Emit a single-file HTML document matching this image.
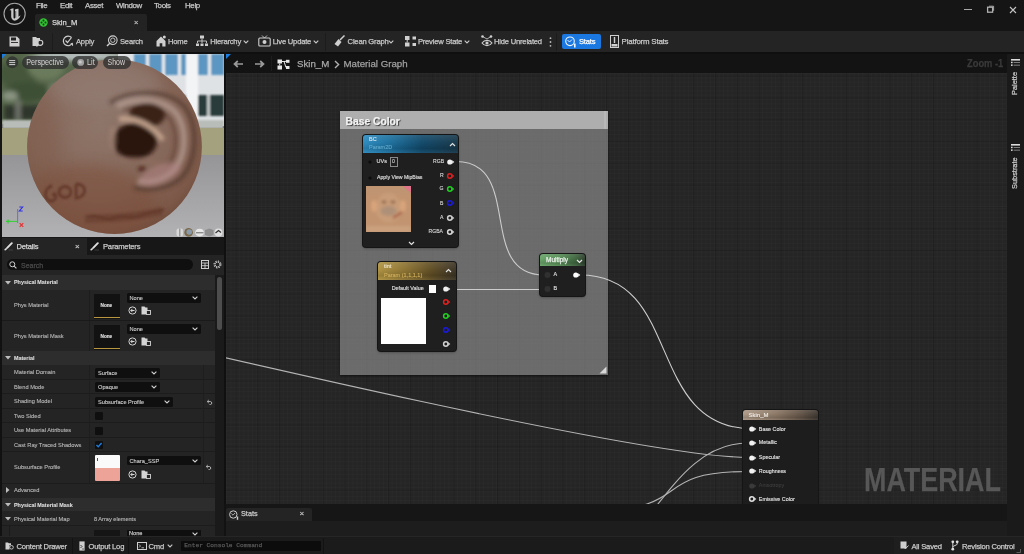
<!DOCTYPE html>
<html><head><meta charset="utf-8">
<style>
*{margin:0;padding:0;box-sizing:border-box}
html,body{width:1024px;height:554px;overflow:hidden;background:#151515;font-family:"Liberation Sans",sans-serif;color:#c8c8c8}
.a{position:absolute}
.t{position:absolute;white-space:nowrap;line-height:1;-webkit-text-stroke:0.25px currentColor}
</style></head><body><div style="position:absolute;left:0;top:0;width:1024px;height:554px;will-change:transform">

<!-- ===== TITLE BAR ===== -->
<div class="a" style="left:0;top:0;width:1024px;height:31px;background:#151515"></div>
<!-- UE logo -->
<svg class="a" style="left:3px;top:2px" width="24" height="24" viewBox="0 0 24 24">
<circle cx="11.6" cy="11.8" r="10.6" fill="none" stroke="#a8a8a8" stroke-width="1.1"/>
<path d="M6.5 8.2 C7.5 7 9 6.3 10.5 6.2 L10.5 15.5 C10.5 16.5 11.3 16.8 12 16.3 L12 7.5 C13 7 14.5 6.6 15.5 6.8 L15.5 14.8 C16.3 14.4 17 13.8 17.6 13.2 C16.8 15.8 14.6 18.2 11.8 18.8 C9.6 18.2 8.2 16.6 8.2 14.8 L8.2 8.3 C7.6 8.2 7 8.1 6.5 8.2Z" fill="#c8c8c8"/>
<path d="M12.7 9 L12.7 15.8" stroke="#151515" stroke-width="0.6"/>
</svg>
<!-- menu -->
<div class="t" style="left:36px;top:2.3px;font-size:7.9px;letter-spacing:-0.35px;color:#c8c8c8">File</div>
<div class="t" style="left:60px;top:2.3px;font-size:7.9px;letter-spacing:-0.35px;color:#c8c8c8">Edit</div>
<div class="t" style="left:85px;top:2.3px;font-size:7.9px;letter-spacing:-0.35px;color:#c8c8c8">Asset</div>
<div class="t" style="left:116px;top:2.3px;font-size:7.9px;letter-spacing:-0.35px;color:#c8c8c8">Window</div>
<div class="t" style="left:154px;top:2.3px;font-size:7.9px;letter-spacing:-0.35px;color:#c8c8c8">Tools</div>
<div class="t" style="left:185px;top:2.3px;font-size:7.9px;letter-spacing:-0.35px;color:#c8c8c8">Help</div>
<!-- tab -->
<div class="a" style="left:35px;top:14px;width:112px;height:17px;background:#232323;border-radius:2px 2px 0 0"></div>
<svg class="a" style="left:38.5px;top:17.5px" width="9" height="9" viewBox="0 0 9 9"><circle cx="4.5" cy="4.5" r="4.2" fill="#36c236"/><circle cx="4.5" cy="2.5" r="1" fill="#124012"/><circle cx="2.5" cy="4.5" r="1" fill="#124012"/><circle cx="6.5" cy="4.5" r="1" fill="#124012"/><circle cx="4.5" cy="6.5" r="1" fill="#124012"/></svg>
<div class="t" style="left:52px;top:18.8px;font-size:7.6px;color:#d8d8d8">Skin_M</div>
<div class="t" style="left:134px;top:18.5px;font-size:7.5px;color:#bbb">×</div>
<!-- window controls -->
<div class="a" style="left:964px;top:9px;width:7.5px;height:1.2px;background:#a8a8a8"></div>
<svg class="a" style="left:986px;top:5px" width="9" height="8" viewBox="0 0 9 8"><rect x="1.6" y="2.2" width="5" height="5" fill="none" stroke="#b0b0b0" stroke-width="1.3"/><path d="M3 1.2 H7.6 V5.8" fill="none" stroke="#b0b0b0" stroke-width="0.9"/></svg>
<svg class="a" style="left:1009px;top:5.5px" width="8" height="8" viewBox="0 0 8 8"><path d="M1 1 L7 7 M7 1 L1 7" stroke="#c4c4c4" stroke-width="1.1"/></svg>
<!-- ===== TOOLBAR ===== -->
<div class="a" style="left:0px;top:31px;width:1024px;height:21px;background:#242424;"></div>
<div class="a" style="left:0px;top:52px;width:1024px;height:2px;background:#0f0f0f;"></div>
<svg class="a" style="left:9px;top:36px" width="11" height="11" viewBox="0 0 11 11"><path d="M0.5 0.5 H8 L10.5 3 V10.5 H0.5Z" fill="#cfcfcf"/><rect x="2" y="1.5" width="5" height="3" fill="#242424"/><rect x="2" y="6" width="7" height="0.9" fill="#242424"/></svg>
<svg class="a" style="left:32px;top:35px" width="12" height="12" viewBox="0 0 12 12"><path d="M0.5 2 H4 L5 3 H8 V5.5 H6.5 V11 H0.5Z" fill="#cfcfcf"/><circle cx="8.2" cy="7.8" r="2.6" fill="none" stroke="#cfcfcf" stroke-width="1.1"/><path d="M6.3 9.8 L4.5 11.5" stroke="#cfcfcf" stroke-width="1.1"/></svg>
<div class="a" style="left:52px;top:33px;width:1px;height:18px;background:#1c1c1c;"></div>
<svg class="a" style="left:62px;top:35px" width="12" height="12" viewBox="0 0 12 12"><path d="M9.5 2.5 A4.8 4.8 0 1 0 10.2 8.5" fill="none" stroke="#cfcfcf" stroke-width="1.2"/><path d="M3.5 5.5 L5.5 7.5 L9.5 2.5" fill="none" stroke="#cfcfcf" stroke-width="1.2"/><path d="M8.3 9.2 L10.5 8.2 L10.6 10.8" fill="none" stroke="#cfcfcf" stroke-width="1"/></svg>
<div class="t" style="left:76px;top:37.9px;font-size:7.6px;letter-spacing:-0.2px;color:#c8c8c8;font-weight:400;">Apply</div>
<svg class="a" style="left:106px;top:35px" width="12" height="12" viewBox="0 0 12 12"><circle cx="6.8" cy="5.2" r="4.3" fill="none" stroke="#cfcfcf" stroke-width="1.1"/><circle cx="6.8" cy="5.2" r="2.2" fill="none" stroke="#cfcfcf" stroke-width="0.9"/><path d="M3.8 8.2 L1 11" stroke="#cfcfcf" stroke-width="1.4"/></svg>
<div class="t" style="left:120px;top:37.9px;font-size:7.6px;letter-spacing:-0.2px;color:#c8c8c8;font-weight:400;">Search</div>
<svg class="a" style="left:156px;top:35px" width="10" height="12" viewBox="0 0 10 12"><path d="M0.5 6 L5 1.5 L9.5 6 V11.5 H6.3 V8.3 H3.7 V11.5 H0.5Z" fill="#cfcfcf"/><circle cx="8.3" cy="2" r="1.5" fill="#cfcfcf"/></svg>
<div class="t" style="left:168px;top:37.9px;font-size:7.6px;letter-spacing:-0.2px;color:#c8c8c8;font-weight:400;">Home</div>
<svg class="a" style="left:196px;top:35px" width="12" height="12" viewBox="0 0 12 12"><rect x="4" y="0.5" width="4" height="3" fill="#cfcfcf"/><path d="M6 3.5 V6 M1.5 6 H10.5 M1.5 6 V8 M6 6 V8 M10.5 6 V8" stroke="#cfcfcf" stroke-width="0.9" fill="none"/><rect x="0" y="8.5" width="3" height="2.5" fill="#cfcfcf"/><rect x="4.5" y="8.5" width="3" height="2.5" fill="#cfcfcf"/><rect x="9" y="8.5" width="3" height="2.5" fill="#cfcfcf"/></svg>
<div class="t" style="left:210.3px;top:37.9px;font-size:7.6px;letter-spacing:-0.2px;color:#c8c8c8;font-weight:400;">Hierarchy</div>
<svg class="a" style="left:242.5px;top:39.7px" width="6" height="4" viewBox="0 0 6 4"><path d="M0.7 0.7 L3 3 L5.3 0.7" fill="none" stroke="#c8c8c8" stroke-width="1.1"/></svg>
<svg class="a" style="left:258px;top:35px" width="13" height="12" viewBox="0 0 13 12"><rect x="0.8" y="3" width="11.4" height="8" rx="1" fill="none" stroke="#cfcfcf" stroke-width="1.1"/><path d="M4 0.5 L6.5 3 L9 0.5" fill="none" stroke="#cfcfcf" stroke-width="0.9"/><circle cx="6.5" cy="7" r="2" fill="#cfcfcf"/></svg>
<div class="t" style="left:272.8px;top:37.9px;font-size:7.6px;letter-spacing:-0.2px;color:#c8c8c8;font-weight:400;">Live Update</div>
<svg class="a" style="left:313px;top:39.7px" width="6" height="4" viewBox="0 0 6 4"><path d="M0.7 0.7 L3 3 L5.3 0.7" fill="none" stroke="#c8c8c8" stroke-width="1.1"/></svg>
<div class="a" style="left:325px;top:33px;width:1px;height:18px;background:#1c1c1c;"></div>
<svg class="a" style="left:334px;top:35px" width="11" height="12" viewBox="0 0 11 12"><path d="M10.5 0.5 L6 5" stroke="#cfcfcf" stroke-width="1.5"/><path d="M4.5 4 L7.5 7 L4 11.5 L0.5 9 Z" fill="#cfcfcf"/></svg>
<div class="t" style="left:347.6px;top:37.9px;font-size:7.6px;letter-spacing:-0.2px;color:#c8c8c8;font-weight:400;">Clean Graph</div>
<svg class="a" style="left:388px;top:39.7px" width="6" height="4" viewBox="0 0 6 4"><path d="M0.7 0.7 L3 3 L5.3 0.7" fill="none" stroke="#c8c8c8" stroke-width="1.1"/></svg>
<svg class="a" style="left:405px;top:35px" width="11" height="12" viewBox="0 0 11 12"><rect x="0" y="1" width="4.5" height="4" fill="#cfcfcf"/><rect x="0" y="7.5" width="4.5" height="4" fill="#cfcfcf"/><rect x="7.5" y="1.5" width="3.5" height="3" fill="#cfcfcf"/><rect x="7.5" y="8" width="3.5" height="3" fill="#cfcfcf"/><path d="M2.2 5 V7.5" stroke="#cfcfcf"/></svg>
<div class="t" style="left:417.9px;top:37.9px;font-size:7.6px;letter-spacing:-0.2px;color:#c8c8c8;font-weight:400;">Preview State</div>
<svg class="a" style="left:464px;top:39.7px" width="6" height="4" viewBox="0 0 6 4"><path d="M0.7 0.7 L3 3 L5.3 0.7" fill="none" stroke="#c8c8c8" stroke-width="1.1"/></svg>
<svg class="a" style="left:481px;top:35px" width="12" height="12" viewBox="0 0 12 12"><circle cx="1.5" cy="1.5" r="1.3" fill="#cfcfcf"/><circle cx="10" cy="1.5" r="1.3" fill="#cfcfcf"/><path d="M1.5 1.5 L6 4 L10 1.5" stroke="#cfcfcf" stroke-width="0.8" fill="none"/><path d="M1 8 C3.5 4.5 8.5 4.5 11 8 C8.5 11.5 3.5 11.5 1 8Z" fill="none" stroke="#cfcfcf" stroke-width="1.1"/><circle cx="6" cy="8" r="1.6" fill="#cfcfcf"/></svg>
<div class="t" style="left:494px;top:37.9px;font-size:7.6px;letter-spacing:-0.2px;color:#c8c8c8;font-weight:400;">Hide Unrelated</div>
<svg class="a" style="left:548.5px;top:37px" width="3" height="10" viewBox="0 0 3 10"><circle cx="1.5" cy="1.2" r="0.9" fill="#bbb"/><circle cx="1.5" cy="5" r="0.9" fill="#bbb"/><circle cx="1.5" cy="8.8" r="0.9" fill="#bbb"/></svg>
<div class="a" style="left:556px;top:33px;width:1px;height:18px;background:#1c1c1c;"></div>
<div class="a" style="left:561.5px;top:34px;width:39px;height:15px;background:#1a78e0;border-radius:2px"></div>
<svg class="a" style="left:565px;top:35.5px" width="12" height="12" viewBox="0 0 12 12"><circle cx="5" cy="5.3" r="4.3" fill="none" stroke="#f0f6ff" stroke-width="1.1"/><path d="M2.5 4 L4.5 6 L7 3.5" fill="none" stroke="#f0f6ff" stroke-width="0.9"/><rect x="9" y="7.5" width="1.6" height="4" fill="#f0f6ff"/></svg>
<div class="t" style="left:579px;top:37.9px;font-size:7.6px;letter-spacing:-0.2px;color:#ffffff;font-weight:400;">Stats</div>
<svg class="a" style="left:610px;top:34.5px" width="9" height="13" viewBox="0 0 9 13"><rect x="0.5" y="0.5" width="8" height="12" fill="none" stroke="#cfcfcf" stroke-width="1"/><rect x="3.8" y="2" width="1.4" height="6" fill="#cfcfcf"/><rect x="1.5" y="9" width="6" height="2.5" fill="#cfcfcf"/></svg>
<div class="t" style="left:621.6px;top:37.9px;font-size:7.9px;letter-spacing:-0.2px;color:#c8c8c8;font-weight:400;">Platform Stats</div>
<!-- ===== LEFT: VIEWPORT ===== -->
<div class="a" style="left:0;top:54px;width:224px;height:482px;background:#151515"></div>
<svg class="a" style="left:2px;top:54px" width="222" height="183" viewBox="2 54 222 183">
<defs>
<filter id="b1" x="-20%" y="-20%" width="140%" height="140%"><feGaussianBlur stdDeviation="1.3"/></filter>
<filter id="b15" x="-30%" y="-30%" width="160%" height="160%"><feGaussianBlur stdDeviation="1.9"/></filter>
<filter id="b2" x="-30%" y="-30%" width="160%" height="160%"><feGaussianBlur stdDeviation="2.8"/></filter>
<filter id="b3" x="-50%" y="-50%" width="200%" height="200%"><feGaussianBlur stdDeviation="7"/></filter>
<radialGradient id="sph" cx="0.42" cy="0.36" r="0.72">
<stop offset="0" stop-color="#8e766a"/>
<stop offset="0.55" stop-color="#86685a"/>
<stop offset="0.85" stop-color="#7c5848"/>
<stop offset="1" stop-color="#6a4636"/>
</radialGradient>
<linearGradient id="floor" x1="0" y1="0" x2="0" y2="1">
<stop offset="0" stop-color="#959597"/><stop offset="1" stop-color="#b2b2b4"/>
</linearGradient>
<clipPath id="sc"><circle cx="114.5" cy="146.6" r="87.4"/></clipPath>
</defs>
<rect x="2" y="54" width="222" height="70" fill="#56664a"/>
<g filter="url(#b2)">
<ellipse cx="18" cy="74" rx="20" ry="14" fill="#44563a"/>
<ellipse cx="46" cy="68" rx="18" ry="12" fill="#6a7a5c"/>
<ellipse cx="28" cy="92" rx="24" ry="10" fill="#3e5034"/>
<ellipse cx="60" cy="90" rx="12" ry="8" fill="#74806a"/>
<ellipse cx="10" cy="96" rx="8" ry="5" fill="#8a9482"/>
<ellipse cx="38" cy="60" rx="12" ry="5" fill="#9aa29a"/>
<rect x="4" y="105" width="70" height="15" fill="#2f3629"/>
<rect x="16" y="100" width="4" height="20" fill="#7a7e76"/>
<ellipse cx="80" cy="56" rx="45" ry="5" fill="#b8c0c0"/>
</g>
<rect x="118" y="54" width="106" height="72" fill="#dfe2e5"/>
<g filter="url(#b1)">
<rect x="134" y="54" width="90" height="21" fill="#5c96c2"/>
<rect x="146" y="54" width="3" height="21" fill="#e8eaec"/>
<rect x="162" y="54" width="3" height="21" fill="#e8eaec"/>
<rect x="178" y="54" width="3" height="21" fill="#e8eaec"/>
<rect x="208" y="54" width="3" height="21" fill="#e8eaec"/>
<rect x="150" y="95" width="74" height="21" fill="#2c3a3a"/>
<rect x="186" y="54" width="12" height="66" fill="#f3f4f5"/>
<rect x="207" y="95" width="3" height="21" fill="#bfc4c4"/>
</g>
<rect x="2" y="120" width="222" height="9" fill="#b9bdb9" filter="url(#b1)"/>
<rect x="2" y="128" width="222" height="28" fill="#a4a27e"/>
<rect x="2" y="155" width="222" height="82" fill="url(#floor)"/>
<circle cx="114.5" cy="146.6" r="87.4" fill="url(#sph)"/>
<g clip-path="url(#sc)">
<ellipse cx="85" cy="205" rx="70" ry="40" fill="#7a4a36" opacity="0.45" filter="url(#b3)"/>
<ellipse cx="105" cy="85" rx="55" ry="25" fill="#95827c" opacity="0.5" filter="url(#b3)"/>
<ellipse cx="40" cy="150" rx="20" ry="50" fill="#7e5a48" opacity="0.4" filter="url(#b3)"/>
<g filter="url(#b15)">
<path d="M110 103 C130 90 168 88 185 107 C198 124 198 158 183 176 C172 188 150 192 134 187" fill="none" stroke="#4a3026" stroke-width="4.5" opacity="0.6"/>
<path d="M117 106 C135 97 163 98 176 113 C187 128 187 155 174 170 C164 180 150 184 138 181" fill="none" stroke="#b39a90" stroke-width="6" opacity="0.8"/>
<path d="M123 110 C140 103 161 105 170 119 C178 133 178 152 168 166" fill="none" stroke="#5a3a2e" stroke-width="2.5" opacity="0.75"/>
<ellipse cx="147" cy="115" rx="18" ry="12" fill="#3a2218"/>
<ellipse cx="135" cy="141" rx="22" ry="18" fill="#2a170f"/>
<path d="M119 119 C135 117 151 124 163 140" fill="none" stroke="#c6a690" stroke-width="5"/>
<ellipse cx="113" cy="138" rx="3" ry="12" fill="#a88a78" opacity="0.6"/>
<ellipse cx="160" cy="174" rx="22" ry="9" transform="rotate(-22 160 174)" fill="#ae8282" opacity="0.6"/>
<path d="M122 160 C136 157 150 160 160 165" fill="none" stroke="#9a7262" stroke-width="3" opacity="0.5"/>
<ellipse cx="142" cy="169" rx="4" ry="2.4" fill="#4e2418"/>
</g>
<g filter="url(#b1)" fill="none" stroke="#5e3426" stroke-width="2.8" opacity="0.8">
<path d="M52 186 C44 187 43 201 51 201 C55 201 57 197 55 194 L52 195"/>
<ellipse cx="65" cy="192" rx="6" ry="5.5"/>
<path d="M76 184 L76 198 C86 198 89 184 76 184"/>
<path d="M85 219 C100 218 125 220 162 211" stroke-width="8" opacity="0.55"/><path d="M88 217 C96 213 104 222 114 218 C124 214 132 220 142 215 C152 211 158 213 164 209" stroke-width="3" opacity="0.8"/>
</g>
</g>
<path d="M2 54 H6.5 L2 58.5Z" fill="#1a7de0"/>
<circle cx="12.2" cy="62.2" r="6" fill="#2e2e2e" opacity="0.78"/>
<rect x="9.2" y="60.1" width="6" height="1" fill="#d0d0d0"/><rect x="9.2" y="62.1" width="6" height="1" fill="#d0d0d0"/><rect x="9.2" y="64.1" width="6" height="1" fill="#d0d0d0"/>
<rect x="22" y="56" width="47" height="13" rx="6.5" fill="#2e2e2e" opacity="0.78"/>
<rect x="72" y="56" width="26" height="13" rx="6.5" fill="#2e2e2e" opacity="0.78"/>
<circle cx="80.7" cy="62.4" r="3.4" fill="#a0a0a0"/><circle cx="80.2" cy="62" r="1.6" fill="#c8c8c8"/>
<rect x="103" y="56" width="28" height="13" rx="6.5" fill="#2e2e2e" opacity="0.78"/>
<text x="26.2" y="65.3" font-family="Liberation Sans" font-size="8.4" fill="#d4d4d4" textLength="37.6" lengthAdjust="spacingAndGlyphs">Perspective</text>
<text x="86.9" y="65.3" font-family="Liberation Sans" font-size="8.4" fill="#d4d4d4" textLength="7.8" lengthAdjust="spacingAndGlyphs">Lit</text>
<text x="107.6" y="65.3" font-family="Liberation Sans" font-size="8.4" fill="#d4d4d4" textLength="17.4" lengthAdjust="spacingAndGlyphs">Show</text>
<line x1="17.6" y1="223" x2="17.6" y2="209" stroke="#7070e0" stroke-width="1.1"/>
<line x1="17.6" y1="221.4" x2="8" y2="221.4" stroke="#3ad03a" stroke-width="1.1"/>
<path d="M19.3 207 H22.7 L19.3 211 H22.7" fill="none" stroke="#3030e8" stroke-width="1.1"/>
<path d="M19.7 223.2 L23.3 226.8 M23.3 223.2 L19.7 226.8" stroke="#e83030" stroke-width="1.2"/>
<path d="M6 221.4 H10 M8 219.6 V223.4" stroke="#30d030" stroke-width="1.2"/>
<rect x="176.5" y="228.5" width="6.5" height="8" rx="2" fill="#d8d8d8"/><rect x="179" y="228.5" width="1.5" height="8" fill="#9a9a9a"/>
<circle cx="188.6" cy="232.4" r="4.3" fill="#7a6a4a"/><circle cx="189.2" cy="232" r="2.8" fill="#8a9aaa"/>
<ellipse cx="199.6" cy="232.6" rx="4.3" ry="3.8" fill="#e6e6e6"/><rect x="196" y="232" width="7.5" height="1.4" fill="#8a8a8a"/>
<path d="M205 230 L209.5 228.5 L213.5 230 V235 L209.5 236.5 L205 235Z" fill="#8e8e8e"/>
<circle cx="218.5" cy="232.6" r="4" fill="#e0e0e0"/><path d="M215.5 233 L218.5 230.5 L221 232.5" stroke="#333" stroke-width="1.2" fill="none"/>
</svg>

<!-- ===== DETAILS ===== -->
<div class="a" style="left:0px;top:237px;width:2px;height:299px;background:#111;"></div>
<div class="a" style="left:2px;top:237px;width:222px;height:18px;background:#171717;"></div>
<div class="a" style="left:2px;top:238px;width:85px;height:17px;background:#242424;"></div>
<svg class="a" style="left:4px;top:242px" width="10" height="9" viewBox="0 0 10 9"><path d="M3.2 5.8 L7.8 1.2" stroke="#e0e0e0" stroke-width="1.9" stroke-linecap="round"/><path d="M1.2 7.7 L2.2 6.8" stroke="#e0e0e0" stroke-width="1.6" stroke-linecap="round"/><path d="M4.5 8 H9" stroke="#555" stroke-width="0.6"/></svg>
<div class="t" style="left:16.5px;top:243.2px;font-size:7.6px;letter-spacing:-0.2px;color:#d4d4d4">Details</div>
<div class="t" style="left:75px;top:242.8px;font-size:8px;color:#c4c4c4">×</div>
<svg class="a" style="left:90px;top:242px" width="10" height="9" viewBox="0 0 10 9"><path d="M3.2 5.8 L7.8 1.2" stroke="#e0e0e0" stroke-width="1.9" stroke-linecap="round"/><path d="M1.2 7.7 L2.2 6.8" stroke="#e0e0e0" stroke-width="1.6" stroke-linecap="round"/><path d="M4.5 8 H9" stroke="#555" stroke-width="0.6"/></svg>
<div class="t" style="left:103px;top:243.2px;font-size:7.6px;letter-spacing:-0.2px;color:#c8c8c8">Parameters</div>
<div class="a" style="left:2px;top:255px;width:222px;height:20px;background:#242424;"></div>
<div class="a" style="left:7px;top:259px;width:186px;height:11px;background:#0f0f0f;border-radius:5.5px"></div>
<svg class="a" style="left:9px;top:261px" width="8" height="8" viewBox="0 0 8 8"><circle cx="3.3" cy="3.3" r="2.5" fill="none" stroke="#d0d0d0" stroke-width="1"/><path d="M5.1 5.1 L7.4 7.4" stroke="#d0d0d0" stroke-width="1.1"/></svg>
<div class="t" style="left:21px;top:261.6px;font-size:7px;color:#4a4a4a;font-weight:400;">Search</div>
<svg class="a" style="left:201px;top:260px" width="8" height="9" viewBox="0 0 8 9"><rect x="0.5" y="0.5" width="7" height="8" fill="none" stroke="#cfcfcf" stroke-width="1"/><path d="M0.5 3 H7.5 M0.5 5.7 H7.5 M4 3 V8.5" stroke="#cfcfcf" stroke-width="0.9"/></svg>
<svg class="a" style="left:213px;top:260px" width="9" height="9" viewBox="0 0 9 9"><circle cx="4.5" cy="4.5" r="2.6" fill="none" stroke="#cfcfcf" stroke-width="1.3" stroke-dasharray="1.4 0.65"/><circle cx="4.5" cy="4.5" r="3.6" fill="none" stroke="#cfcfcf" stroke-width="1" stroke-dasharray="1.2 1.63"/></svg>
<div class="a" style="left:2px;top:275px;width:222px;height:261px;background:#1f1f1f;"></div>
<div class="a" style="left:215px;top:275px;width:9px;height:261px;background:#1a1a1a;"></div>
<div class="a" style="left:217px;top:277px;width:5px;height:53px;background:#4d4d4d;border-radius:2.5px"></div>
<div class="a" style="left:2px;top:275px;width:213px;height:15px;background:#2d2d2d;"></div>
<svg class="a" style="left:5px;top:280.5px" width="6" height="4" viewBox="0 0 6 4"><path d="M0 0 L6 0 L3 3.5Z" fill="#bdbdbd"/></svg>
<div class="t" style="left:14px;top:280.4px;font-size:5.4px;-webkit-text-stroke:0.12px currentColor;color:#dcdcdc;font-weight:700;">Physical Material</div>
<div class="a" style="left:2px;top:290px;width:213px;height:30px;background:#242424;"></div>
<div class="a" style="left:89px;top:290px;width:1px;height:30px;background:#1d1d1d;"></div>
<div class="t" style="left:14px;top:302.8px;font-size:5.7px;-webkit-text-stroke:0.12px currentColor;color:#b6b6b6;font-weight:400;">Phys Material</div>
<div class="a" style="left:94px;top:293.5px;width:26px;height:25px;background:#121212;"></div>
<div class="a" style="left:94px;top:317px;width:26px;height:1.3px;background:#b8963e;"></div>
<div class="t" style="left:100.5px;top:303.8px;font-size:4.7px;-webkit-text-stroke:0.12px currentColor;color:#e0e0e0;font-weight:700;">None</div>
<div class="a" style="left:126.5px;top:293.3px;width:74px;height:9.5px;background:#0f0f0f;border-radius:1.5px"></div>
<div class="t" style="left:129.5px;top:295.8px;font-size:5.65px;-webkit-text-stroke:0.12px currentColor;color:#cccccc;font-weight:400;">None</div>
<svg class="a" style="left:191.5px;top:296.05px" width="6" height="4" viewBox="0 0 6 4"><path d="M0.6 0.6 L3 3 L5.4 0.6" fill="none" stroke="#d0d0d0" stroke-width="1.1"/></svg>
<svg class="a" style="left:128px;top:306px" width="9" height="9" viewBox="0 0 9 9"><circle cx="4.5" cy="4.5" r="3.6" fill="none" stroke="#d4d4d4" stroke-width="1"/><path d="M6.5 4.5 H2.8 M4.4 2.9 L2.8 4.5 L4.4 6.1" fill="none" stroke="#d4d4d4" stroke-width="1"/></svg>
<svg class="a" style="left:141px;top:306px" width="10" height="9" viewBox="0 0 10 9"><path d="M0.5 0.5 H3.5 L4.5 1.5 H6.5 V4 H5 V8.5 H0.5Z" fill="#d4d4d4"/><rect x="5.5" y="4.5" width="4" height="4" fill="none" stroke="#d4d4d4" stroke-width="0.9"/></svg>
<div class="a" style="left:2px;top:321px;width:213px;height:30px;background:#242424;"></div>
<div class="a" style="left:89px;top:321px;width:1px;height:30px;background:#1d1d1d;"></div>
<div class="t" style="left:14px;top:333.6px;font-size:5.7px;-webkit-text-stroke:0.12px currentColor;color:#b6b6b6;font-weight:400;">Phys Material Mask</div>
<div class="a" style="left:94px;top:324.5px;width:26px;height:25px;background:#121212;"></div>
<div class="a" style="left:94px;top:348px;width:26px;height:1.3px;background:#b8963e;"></div>
<div class="t" style="left:100.5px;top:334.8px;font-size:4.7px;-webkit-text-stroke:0.12px currentColor;color:#e0e0e0;font-weight:700;">None</div>
<div class="a" style="left:126.5px;top:324.3px;width:74px;height:9.5px;background:#0f0f0f;border-radius:1.5px"></div>
<div class="t" style="left:129.5px;top:326.8px;font-size:5.65px;-webkit-text-stroke:0.12px currentColor;color:#cccccc;font-weight:400;">None</div>
<svg class="a" style="left:191.5px;top:327.05px" width="6" height="4" viewBox="0 0 6 4"><path d="M0.6 0.6 L3 3 L5.4 0.6" fill="none" stroke="#d0d0d0" stroke-width="1.1"/></svg>
<svg class="a" style="left:128px;top:337px" width="9" height="9" viewBox="0 0 9 9"><circle cx="4.5" cy="4.5" r="3.6" fill="none" stroke="#d4d4d4" stroke-width="1"/><path d="M6.5 4.5 H2.8 M4.4 2.9 L2.8 4.5 L4.4 6.1" fill="none" stroke="#d4d4d4" stroke-width="1"/></svg>
<svg class="a" style="left:141px;top:337px" width="10" height="9" viewBox="0 0 10 9"><path d="M0.5 0.5 H3.5 L4.5 1.5 H6.5 V4 H5 V8.5 H0.5Z" fill="#d4d4d4"/><rect x="5.5" y="4.5" width="4" height="4" fill="none" stroke="#d4d4d4" stroke-width="0.9"/></svg>
<div class="a" style="left:2px;top:320px;width:213px;height:1px;background:#1a1a1a;"></div>
<div class="a" style="left:2px;top:351px;width:213px;height:14px;background:#2d2d2d;"></div>
<svg class="a" style="left:5px;top:356px" width="6" height="4" viewBox="0 0 6 4"><path d="M0 0 L6 0 L3 3.5Z" fill="#bdbdbd"/></svg>
<div class="t" style="left:14px;top:355.9px;font-size:5.4px;-webkit-text-stroke:0.12px currentColor;color:#dcdcdc;font-weight:700;">Material</div>
<div class="a" style="left:2px;top:365px;width:213px;height:15px;background:#242424;"></div>
<div class="a" style="left:2px;top:379px;width:213px;height:1px;background:#1c1c1c;"></div>
<div class="a" style="left:89px;top:365px;width:1px;height:15px;background:#1e1e1e;"></div>
<div class="a" style="left:203px;top:365px;width:1px;height:15px;background:#1e1e1e;"></div>
<div class="t" style="left:14px;top:370.2px;font-size:5.7px;-webkit-text-stroke:0.12px currentColor;color:#b6b6b6;font-weight:400;">Material Domain</div>
<div class="a" style="left:2px;top:380px;width:213px;height:14px;background:#242424;"></div>
<div class="a" style="left:2px;top:393px;width:213px;height:1px;background:#1c1c1c;"></div>
<div class="a" style="left:89px;top:380px;width:1px;height:14px;background:#1e1e1e;"></div>
<div class="a" style="left:203px;top:380px;width:1px;height:14px;background:#1e1e1e;"></div>
<div class="t" style="left:14px;top:384.8px;font-size:5.7px;-webkit-text-stroke:0.12px currentColor;color:#b6b6b6;font-weight:400;">Blend Mode</div>
<div class="a" style="left:2px;top:394px;width:213px;height:15px;background:#242424;"></div>
<div class="a" style="left:2px;top:408px;width:213px;height:1px;background:#1c1c1c;"></div>
<div class="a" style="left:89px;top:394px;width:1px;height:15px;background:#1e1e1e;"></div>
<div class="a" style="left:203px;top:394px;width:1px;height:15px;background:#1e1e1e;"></div>
<div class="t" style="left:14px;top:399.2px;font-size:5.7px;-webkit-text-stroke:0.12px currentColor;color:#b6b6b6;font-weight:400;">Shading Model</div>
<div class="a" style="left:2px;top:409px;width:213px;height:14px;background:#242424;"></div>
<div class="a" style="left:2px;top:422px;width:213px;height:1px;background:#1c1c1c;"></div>
<div class="a" style="left:89px;top:409px;width:1px;height:14px;background:#1e1e1e;"></div>
<div class="a" style="left:203px;top:409px;width:1px;height:14px;background:#1e1e1e;"></div>
<div class="t" style="left:14px;top:413.8px;font-size:5.7px;-webkit-text-stroke:0.12px currentColor;color:#b6b6b6;font-weight:400;">Two Sided</div>
<div class="a" style="left:2px;top:423px;width:213px;height:15px;background:#242424;"></div>
<div class="a" style="left:2px;top:437px;width:213px;height:1px;background:#1c1c1c;"></div>
<div class="a" style="left:89px;top:423px;width:1px;height:15px;background:#1e1e1e;"></div>
<div class="a" style="left:203px;top:423px;width:1px;height:15px;background:#1e1e1e;"></div>
<div class="t" style="left:14px;top:428.2px;font-size:5.7px;-webkit-text-stroke:0.12px currentColor;color:#b6b6b6;font-weight:400;">Use Material Attributes</div>
<div class="a" style="left:2px;top:438px;width:213px;height:14px;background:#242424;"></div>
<div class="a" style="left:2px;top:451px;width:213px;height:1px;background:#1c1c1c;"></div>
<div class="a" style="left:89px;top:438px;width:1px;height:14px;background:#1e1e1e;"></div>
<div class="a" style="left:203px;top:438px;width:1px;height:14px;background:#1e1e1e;"></div>
<div class="t" style="left:14px;top:442.8px;font-size:5.7px;-webkit-text-stroke:0.12px currentColor;color:#b6b6b6;font-weight:400;">Cast Ray Traced Shadows</div>
<div class="a" style="left:95px;top:368px;width:65px;height:9.6px;background:#0f0f0f;border-radius:1.5px"></div>
<div class="t" style="left:98px;top:370.6px;font-size:5.65px;-webkit-text-stroke:0.12px currentColor;color:#cccccc;font-weight:400;">Surface</div>
<svg class="a" style="left:151px;top:370.8px" width="6" height="4" viewBox="0 0 6 4"><path d="M0.6 0.6 L3 3 L5.4 0.6" fill="none" stroke="#d0d0d0" stroke-width="1.1"/></svg>
<div class="a" style="left:95px;top:382px;width:65px;height:10px;background:#0f0f0f;border-radius:1.5px"></div>
<div class="t" style="left:98px;top:384.8px;font-size:5.65px;-webkit-text-stroke:0.12px currentColor;color:#cccccc;font-weight:400;">Opaque</div>
<svg class="a" style="left:151px;top:385.0px" width="6" height="4" viewBox="0 0 6 4"><path d="M0.6 0.6 L3 3 L5.4 0.6" fill="none" stroke="#d0d0d0" stroke-width="1.1"/></svg>
<div class="a" style="left:95px;top:397px;width:78px;height:10.4px;background:#0f0f0f;border-radius:1.5px"></div>
<div class="t" style="left:98px;top:400.0px;font-size:5.65px;-webkit-text-stroke:0.12px currentColor;color:#cccccc;font-weight:400;">Subsurface Profile</div>
<svg class="a" style="left:164px;top:400.2px" width="6" height="4" viewBox="0 0 6 4"><path d="M0.6 0.6 L3 3 L5.4 0.6" fill="none" stroke="#d0d0d0" stroke-width="1.1"/></svg>
<svg class="a" style="left:205.5px;top:398.5px" width="7" height="7" viewBox="0 0 7 7"><path d="M1.5 2.5 H4.5 C6 2.5 6.3 5.5 4.5 5.5 H3.5 M2.8 1 L1.2 2.5 L2.8 4" fill="none" stroke="#bbb" stroke-width="0.9"/></svg>
<div class="a" style="left:95px;top:412.4px;width:7.5px;height:7.6px;background:#0f0f0f;border-radius:1px"></div>
<div class="a" style="left:95px;top:427px;width:7.5px;height:7.6px;background:#0f0f0f;border-radius:1px"></div>
<div class="a" style="left:95px;top:441px;width:7.5px;height:7.6px;background:#0f0f0f;border-radius:1px"></div>
<svg class="a" style="left:95px;top:441px" width="8" height="8" viewBox="0 0 8 8"><path d="M1.5 4 L3.2 5.8 L6.6 2" fill="none" stroke="#1a7de0" stroke-width="1.4"/></svg>
<div class="a" style="left:2px;top:452px;width:213px;height:32px;background:#242424;"></div>
<div class="a" style="left:89px;top:452px;width:1px;height:32px;background:#1e1e1e;"></div>
<div class="a" style="left:203px;top:452px;width:1px;height:32px;background:#1e1e1e;"></div>
<div class="t" style="left:14px;top:465.1px;font-size:5.7px;-webkit-text-stroke:0.12px currentColor;color:#b6b6b6;font-weight:400;">Subsurface Profile</div>
<div class="a" style="left:94.5px;top:455px;width:25.7px;height:13px;background:#fafafa;border-radius:1px 1px 0 0"></div>
<div class="a" style="left:94.5px;top:468px;width:25.7px;height:13px;background:#eda397;border-radius:0 0 1px 1px"></div>
<div class="a" style="left:97px;top:458px;width:0.8px;height:2.5px;background:#555;"></div>
<div class="a" style="left:126.5px;top:456.2px;width:74px;height:9px;background:#0f0f0f;border-radius:1.5px"></div>
<div class="t" style="left:129.5px;top:458.5px;font-size:5.65px;-webkit-text-stroke:0.12px currentColor;color:#cccccc;font-weight:400;">Chara_SSP</div>
<svg class="a" style="left:191.5px;top:458.7px" width="6" height="4" viewBox="0 0 6 4"><path d="M0.6 0.6 L3 3 L5.4 0.6" fill="none" stroke="#d0d0d0" stroke-width="1.1"/></svg>
<svg class="a" style="left:128px;top:469.5px" width="9" height="9" viewBox="0 0 9 9"><circle cx="4.5" cy="4.5" r="3.6" fill="none" stroke="#d4d4d4" stroke-width="1"/><path d="M6.5 4.5 H2.8 M4.4 2.9 L2.8 4.5 L4.4 6.1" fill="none" stroke="#d4d4d4" stroke-width="1"/></svg>
<svg class="a" style="left:141px;top:469.5px" width="10" height="9" viewBox="0 0 10 9"><path d="M0.5 0.5 H3.5 L4.5 1.5 H6.5 V4 H5 V8.5 H0.5Z" fill="#d4d4d4"/><rect x="5.5" y="4.5" width="4" height="4" fill="none" stroke="#d4d4d4" stroke-width="0.9"/></svg>
<svg class="a" style="left:204.5px;top:463.5px" width="7" height="7" viewBox="0 0 7 7"><path d="M1.5 2.5 H4.5 C6 2.5 6.3 5.5 4.5 5.5 H3.5 M2.8 1 L1.2 2.5 L2.8 4" fill="none" stroke="#bbb" stroke-width="0.9"/></svg>
<div class="a" style="left:2px;top:483px;width:213px;height:1px;background:#1c1c1c;"></div>
<div class="a" style="left:2px;top:484px;width:213px;height:14px;background:#242424;"></div>
<svg class="a" style="left:6px;top:487px" width="4" height="6" viewBox="0 0 4 6"><path d="M0 0 L3.5 3 L0 6Z" fill="#bdbdbd"/></svg>
<div class="t" style="left:14px;top:487.8px;font-size:5.7px;-webkit-text-stroke:0.12px currentColor;color:#b6b6b6;font-weight:400;">Advanced</div>
<div class="a" style="left:2px;top:498px;width:213px;height:13px;background:#2d2d2d;"></div>
<svg class="a" style="left:5px;top:502.6px" width="6" height="4" viewBox="0 0 6 4"><path d="M0 0 L6 0 L3 3.5Z" fill="#bdbdbd"/></svg>
<div class="t" style="left:14px;top:502.5px;font-size:5.4px;-webkit-text-stroke:0.12px currentColor;color:#dcdcdc;font-weight:700;">Physical Material Mask</div>
<div class="a" style="left:2px;top:511px;width:213px;height:15px;background:#242424;"></div>
<div class="a" style="left:2px;top:525px;width:213px;height:1px;background:#1c1c1c;"></div>
<svg class="a" style="left:5px;top:517.2px" width="6" height="4" viewBox="0 0 6 4"><path d="M0 0 L6 0 L3 3.5Z" fill="#bdbdbd"/></svg>
<div class="t" style="left:14px;top:517.0px;font-size:5.7px;-webkit-text-stroke:0.12px currentColor;color:#b6b6b6;font-weight:400;">Physical Material Map</div>
<div class="t" style="left:94px;top:517.0px;font-size:5.6px;-webkit-text-stroke:0.12px currentColor;color:#b6b6b6;font-weight:400;">8 Array elements</div>
<div class="a" style="left:2px;top:526px;width:213px;height:10px;background:#242424;"></div>
<div class="a" style="left:9px;top:526px;width:1px;height:10px;background:#1b1b1b;"></div>
<div class="a" style="left:94px;top:530px;width:26px;height:6px;background:#151515;"></div>
<div class="a" style="left:126.5px;top:530px;width:74px;height:6px;background:#0f0f0f;"></div>
<div class="a" style="left:129px;top:530px;width:30px;height:6px;overflow:hidden"><div class="t" style="left:0;top:1px;font-size:5.65px;color:#bbb">None</div></div>
<svg class="a" style="left:192px;top:532px" width="6" height="4" viewBox="0 0 6 4"><path d="M0.6 0.6 L3 3 L5.4 0.6" fill="none" stroke="#d0d0d0" stroke-width="1.1"/></svg>

<!-- ===== GRAPH ===== -->
<div class="a" style="left:224px;top:54px;width:2px;height:450px;background:#101010;"></div>
<div class="a" style="left:226px;top:54px;width:781px;height:19px;background:#131313;"></div>
<svg class="a" style="left:226px;top:54px" width="5" height="5" viewBox="0 0 5 5"><path d="M0 0 H5 L0 5Z" fill="#1a7de0"/></svg>
<svg class="a" style="left:233px;top:60px" width="11" height="8" viewBox="0 0 11 8"><path d="M10 4 H2 M4.8 1 L1.5 4 L4.8 7" fill="none" stroke="#9a9a9a" stroke-width="1.7"/></svg>
<svg class="a" style="left:254px;top:60px" width="11" height="8" viewBox="0 0 11 8"><path d="M1 4 H9 M6.2 1 L9.5 4 L6.2 7" fill="none" stroke="#9a9a9a" stroke-width="1.7"/></svg>
<div class="a" style="left:270.5px;top:56px;width:1px;height:15px;background:#1e1e1e;"></div>
<svg class="a" style="left:277px;top:59px" width="13" height="11" viewBox="0 0 13 11"><rect x="0.5" y="0.5" width="4.5" height="4" fill="#e8e8e8"/><rect x="0.5" y="6.5" width="4.5" height="4" fill="#e8e8e8"/><rect x="9" y="0.8" width="3.5" height="3" fill="#e8e8e8"/><rect x="9" y="7" width="3.5" height="3" fill="#e8e8e8"/><path d="M5 2.5 H7 L9 2.3 M2.7 4.5 V6.5 M7 2.5 L9 8.5" fill="none" stroke="#e8e8e8" stroke-width="1"/></svg>
<div class="t" style="left:297px;top:59.4px;font-size:9.7px;color:#a8a8a8;font-weight:400;">Skin_M</div>
<svg class="a" style="left:334px;top:60px" width="6" height="9" viewBox="0 0 6 9"><path d="M1 1 L4.6 4.5 L1 8" fill="none" stroke="#b0b0b0" stroke-width="1.4"/></svg>
<div class="t" style="left:343.5px;top:59.4px;font-size:9.7px;color:#a0a0a0;font-weight:400;">Material Graph</div>
<div class="t" style="left:967.3px;top:57.6px;font-size:11.8px;color:#3a3a3a;font-weight:700;transform:scaleX(0.79);transform-origin:0 0">Zoom -1</div>
<div class="a" style="left:226px;top:73px;width:781px;height:431px;background-color:#252525;background-image:linear-gradient(to right, rgba(0,0,0,0.14) 1px, transparent 1px),linear-gradient(to bottom, rgba(0,0,0,0.10) 1px, transparent 1px),linear-gradient(to right, rgba(255,255,255,0.016) 1px, transparent 1px),linear-gradient(to bottom, rgba(255,255,255,0.016) 1px, transparent 1px);background-size:21.8px 21.8px,21.8px 21.8px,4.36px 4.36px,4.36px 4.36px;background-position:9.4px 2.7px,9.4px 2.7px,0 0,0 0"></div>
<div class="a" style="left:226px;top:206px;width:781px;height:1px;background:rgba(255,255,255,0.035)"></div>
<div class="a" style="left:226px;top:468px;width:781px;height:1px;background:rgba(255,255,255,0.035)"></div>
<div class="a" style="left:824px;top:73px;width:1px;height:431px;background:rgba(255,255,255,0.03)"></div>
<div class="t" style="left:864px;top:463px;font-size:33px;font-weight:700;color:#575757;transform:scaleX(0.815);transform-origin:0 0">MATERIAL</div>
<div class="a" style="left:340px;top:111px;width:268px;height:264px;background:rgba(160,160,160,0.57);box-shadow:0 1px 2px rgba(0,0,0,0.55)"></div>
<div class="a" style="left:340px;top:111px;width:268px;height:18px;background:#aeaeae;"></div>
<div class="a" style="left:604px;top:111px;width:2px;height:18px;background:#b8b8b8;"></div>
<div class="t" style="left:345.5px;top:116.8px;font-size:10.3px;color:#f2f2f2;font-weight:700;text-shadow:1px 1px 1px #333">Base Color</div>
<svg class="a" style="left:599px;top:366px" width="8" height="8" viewBox="0 0 8 8"><path d="M7.5 0.5 L7.5 7.5 L0.5 7.5Z" fill="#d8d8d8"/></svg>
<svg class="a" style="left:226px;top:73px" width="781" height="431" viewBox="226 73 781 431"><g fill="none" stroke="#cdcdcd" stroke-width="1.1" stroke-linecap="round"><path d="M452 161.5 L456 161.5 C524 161.5 476 275 544 275"/><path d="M451 289.5 L544 289.5"/><path d="M580 275 C684 275 644 429 754 429"/></g><g fill="none" stroke="#b4b4b4" stroke-width="1.1" stroke-linecap="round"><path d="M-980 100 C-780 100 548 457.4 748 457.4"/><path d="M560 575 C645 575 663 443 748 443"/><path d="M595 510 C695 510 648 471.5 748 471.5"/></g></svg>
<div class="a" style="left:363px;top:134.5px;width:95px;height:112.5px;background:#1f1f1f;border-radius:3px;box-shadow:0 0 0 1px #151515,0 1px 3px rgba(0,0,0,0.5)"></div>
<div class="a" style="left:363px;top:134.5px;width:95px;height:18.5px;background:linear-gradient(to right,#2c8cc0 0%,#1c6e9c 30%,#11496a 62%,#18384a 100%);border-radius:3px 3px 0 0"></div>
<div class="a" style="left:363px;top:134.5px;width:95px;height:18.5px;background:linear-gradient(to bottom,rgba(255,255,255,0.10) 0%,rgba(255,255,255,0.02) 40%,rgba(0,0,0,0.12) 75%,rgba(255,255,255,0.04) 100%);border-radius:3px 3px 0 0"></div>
<div class="t" style="left:369px;top:137.2px;font-size:5.5px;-webkit-text-stroke:0.12px currentColor;color:#d8e4ec;font-weight:400;">BC</div>
<div class="t" style="left:369px;top:145.4px;font-size:5.5px;-webkit-text-stroke:0.12px currentColor;color:#5fa8cc;font-weight:400;">Param2D</div>
<svg class="a" style="left:449px;top:142px" width="7" height="5" viewBox="0 0 7 5"><path d="M1 4 L3.5 1.5 L6 4" fill="none" stroke="#e0e0e0" stroke-width="1.2"/></svg>
<svg class="a" style="left:368px;top:160px" width="4" height="4"><circle cx="2" cy="2" r="1.6" fill="#0c0c0c"/></svg>
<div class="t" style="left:376.5px;top:159.2px;font-size:5.5px;-webkit-text-stroke:0.12px currentColor;color:#e0e0e0;font-weight:400;">UVs</div>
<div class="a" style="left:389.5px;top:157px;width:8.5px;height:10px;background:transparent;border:0.8px solid #8a8a8a"></div>
<div class="t" style="left:392px;top:159.4px;font-size:5.2px;-webkit-text-stroke:0.12px currentColor;color:#cfcfcf;font-weight:400;">0</div>
<div class="t" style="left:433px;top:159.4px;font-size:5.1px;-webkit-text-stroke:0.12px currentColor;color:#d8d8d8;font-weight:400;">RGB</div>
<svg class="a" style="left:445.5px;top:158px" width="9" height="8" viewBox="0 0 9 8"><path d="M6.2 2.3 L8.3 4 L6.2 5.7Z" fill="#f0f0f0"/><circle cx="3.8" cy="4" r="2.6" fill="#f0f0f0" stroke="#f0f0f0" stroke-width="0"/></svg>
<svg class="a" style="left:368px;top:175.5px" width="4" height="4"><circle cx="2" cy="2" r="1.6" fill="#0c0c0c"/></svg>
<div class="t" style="left:377px;top:175.1px;font-size:5.2px;-webkit-text-stroke:0.12px currentColor;color:#e0e0e0;font-weight:400;">Apply View MipBias</div>
<div class="t" style="left:439.9px;top:172.9px;font-size:5.1px;-webkit-text-stroke:0.12px currentColor;color:#d8d8d8;font-weight:400;">R</div>
<svg class="a" style="left:445.5px;top:171.5px" width="9" height="8" viewBox="0 0 9 8"><path d="M6.2 2.3 L8.3 4 L6.2 5.7Z" fill="#e02020"/><circle cx="3.8" cy="4" r="2.2" fill="none" stroke="#e02020" stroke-width="1.5"/></svg>
<div class="t" style="left:439.6px;top:186.4px;font-size:5.1px;-webkit-text-stroke:0.12px currentColor;color:#d8d8d8;font-weight:400;">G</div>
<svg class="a" style="left:445.5px;top:185px" width="9" height="8" viewBox="0 0 9 8"><path d="M6.2 2.3 L8.3 4 L6.2 5.7Z" fill="#20d020"/><circle cx="3.8" cy="4" r="2.2" fill="none" stroke="#20d020" stroke-width="1.5"/></svg>
<div class="t" style="left:439.9px;top:200.8px;font-size:5.1px;-webkit-text-stroke:0.12px currentColor;color:#d8d8d8;font-weight:400;">B</div>
<svg class="a" style="left:445.5px;top:199.4px" width="9" height="8" viewBox="0 0 9 8"><path d="M6.2 2.3 L8.3 4 L6.2 5.7Z" fill="#1a1ae0"/><circle cx="3.8" cy="4" r="2.2" fill="none" stroke="#1a1ae0" stroke-width="1.5"/></svg>
<div class="t" style="left:439.9px;top:215.1px;font-size:5.1px;-webkit-text-stroke:0.12px currentColor;color:#d8d8d8;font-weight:400;">A</div>
<svg class="a" style="left:445.5px;top:213.7px" width="9" height="8" viewBox="0 0 9 8"><path d="M6.2 2.3 L8.3 4 L6.2 5.7Z" fill="#d0d0d0"/><circle cx="3.8" cy="4" r="2.2" fill="none" stroke="#d0d0d0" stroke-width="1.5"/></svg>
<div class="t" style="left:428.5px;top:229.2px;font-size:5.1px;-webkit-text-stroke:0.12px currentColor;color:#d8d8d8;font-weight:400;">RGBA</div>
<svg class="a" style="left:445.5px;top:227.8px" width="9" height="8" viewBox="0 0 9 8"><path d="M6.2 2.3 L8.3 4 L6.2 5.7Z" fill="#d8d8d8"/><circle cx="3.8" cy="4" r="2.2" fill="none" stroke="#d8d8d8" stroke-width="1.5"/></svg>
<svg class="a" style="left:366px;top:186px" width="45" height="46" viewBox="0 0 45 46"><defs><filter id="tb" x="-20%" y="-20%" width="140%" height="140%"><feGaussianBlur stdDeviation="1.4"/></filter></defs><rect width="45" height="46" fill="#c29470"/><g filter="url(#tb)"><rect x="0" y="0" width="45" height="8" fill="#bf9472"/><ellipse cx="22.5" cy="22" rx="13" ry="15" fill="#c89c78"/><ellipse cx="8" cy="20" rx="3" ry="6" fill="#d8a47a"/><ellipse cx="37" cy="20" rx="3" ry="6" fill="#d8a47a"/><ellipse cx="18" cy="16" rx="2.5" ry="1.5" fill="#8a6248"/><ellipse cx="27" cy="16" rx="2.5" ry="1.5" fill="#8a6248"/><ellipse cx="22.5" cy="25" rx="8" ry="5" fill="#ae9078"/><path d="M27 32 L36 26" stroke="#a0503a" stroke-width="2"/><rect x="0" y="40" width="45" height="6" fill="#caa07e"/></g><path d="M37 0 H45 V7Z" fill="#e0748a"/></svg>
<svg class="a" style="left:407.5px;top:241px" width="7" height="5" viewBox="0 0 7 5"><path d="M1 1 L3.5 3.5 L6 1" fill="none" stroke="#e0e0e0" stroke-width="1.2"/></svg>
<div class="a" style="left:378px;top:262px;width:78px;height:89px;background:#1f1f1f;border-radius:3px;box-shadow:0 0 0 1px #151515,0 1px 3px rgba(0,0,0,0.5)"></div>
<div class="a" style="left:378px;top:262px;width:78px;height:17.5px;background:linear-gradient(to right,#b09442 0%,#8c7232 35%,#604e24 68%,#3c3426 100%);border-radius:3px 3px 0 0"></div>
<div class="a" style="left:378px;top:262px;width:78px;height:17.5px;background:linear-gradient(to bottom,rgba(255,255,255,0.10) 0%,rgba(255,255,255,0.02) 40%,rgba(0,0,0,0.12) 75%,rgba(255,255,255,0.04) 100%);border-radius:3px 3px 0 0"></div>
<div class="t" style="left:384px;top:263.9px;font-size:5.5px;-webkit-text-stroke:0.12px currentColor;color:#f0e6cc;font-weight:400;">tint</div>
<div class="t" style="left:384px;top:273.1px;font-size:5.5px;-webkit-text-stroke:0.12px currentColor;color:#cfae5c;font-weight:400;">Param (1,1,1,1)</div>
<svg class="a" style="left:445px;top:268px" width="7" height="5" viewBox="0 0 7 5"><path d="M1 4 L3.5 1.5 L6 4" fill="none" stroke="#e0e0e0" stroke-width="1.2"/></svg>
<div class="t" style="left:391.7px;top:286.1px;font-size:5.4px;-webkit-text-stroke:0.12px currentColor;color:#e0e0e0;font-weight:400;">Default Value</div>
<div class="a" style="left:428.5px;top:285px;width:7.5px;height:7.5px;background:#ffffff;"></div>
<svg class="a" style="left:442px;top:285px" width="9" height="8" viewBox="0 0 9 8"><path d="M6.2 2.3 L8.3 4 L6.2 5.7Z" fill="#f0f0f0"/><circle cx="3.8" cy="4" r="2.6" fill="#f0f0f0" stroke="#f0f0f0" stroke-width="0"/></svg>
<div class="a" style="left:381px;top:298.3px;width:45px;height:45.5px;background:#ffffff;"></div>
<svg class="a" style="left:442px;top:298.3px" width="9" height="8" viewBox="0 0 9 8"><path d="M6.2 2.3 L8.3 4 L6.2 5.7Z" fill="#e02020"/><circle cx="3.8" cy="4" r="2.2" fill="none" stroke="#e02020" stroke-width="1.5"/></svg>
<svg class="a" style="left:442px;top:312.4px" width="9" height="8" viewBox="0 0 9 8"><path d="M6.2 2.3 L8.3 4 L6.2 5.7Z" fill="#20d020"/><circle cx="3.8" cy="4" r="2.2" fill="none" stroke="#20d020" stroke-width="1.5"/></svg>
<svg class="a" style="left:442px;top:326.3px" width="9" height="8" viewBox="0 0 9 8"><path d="M6.2 2.3 L8.3 4 L6.2 5.7Z" fill="#1a1ae0"/><circle cx="3.8" cy="4" r="2.2" fill="none" stroke="#1a1ae0" stroke-width="1.5"/></svg>
<svg class="a" style="left:442px;top:340.4px" width="9" height="8" viewBox="0 0 9 8"><path d="M6.2 2.3 L8.3 4 L6.2 5.7Z" fill="#d0d0d0"/><circle cx="3.8" cy="4" r="2.2" fill="none" stroke="#d0d0d0" stroke-width="1.5"/></svg>
<div class="a" style="left:540px;top:254px;width:45px;height:42px;background:#1f1f1f;border-radius:3px;box-shadow:0 0 0 1px #151515,0 1px 3px rgba(0,0,0,0.5)"></div>
<div class="a" style="left:540px;top:254px;width:45px;height:12px;background:linear-gradient(to right,#6aa46a 0%,#548a54 45%,#3e643e 80%,#2e3e2e 100%);border-radius:3px 3px 0 0"></div>
<div class="a" style="left:540px;top:254px;width:45px;height:12px;background:linear-gradient(to bottom,rgba(255,255,255,0.10) 0%,rgba(255,255,255,0.02) 40%,rgba(0,0,0,0.12) 75%,rgba(255,255,255,0.04) 100%);border-radius:3px 3px 0 0"></div>
<div class="t" style="left:546px;top:257.4px;font-size:6.5px;color:#e8f0e8;font-weight:400;">Multiply</div>
<svg class="a" style="left:576px;top:258.5px" width="7" height="5" viewBox="0 0 7 5"><path d="M1 1 L3.5 3.5 L6 1" fill="none" stroke="#e8e8e8" stroke-width="1.2"/></svg>
<svg class="a" style="left:543px;top:271px" width="9" height="22" viewBox="0 0 9 22"><circle cx="4.5" cy="4" r="3" fill="#303030"/><circle cx="4.5" cy="18" r="3" fill="#303030"/></svg>
<div class="t" style="left:553.5px;top:272.1px;font-size:5.4px;-webkit-text-stroke:0.12px currentColor;color:#e0e0e0;font-weight:400;">A</div>
<div class="t" style="left:553.5px;top:286.2px;font-size:5.4px;-webkit-text-stroke:0.12px currentColor;color:#e0e0e0;font-weight:400;">B</div>
<svg class="a" style="left:571.5px;top:270.8px" width="9" height="8" viewBox="0 0 9 8"><path d="M6.2 2.3 L8.3 4 L6.2 5.7Z" fill="#ffffff"/><circle cx="3.8" cy="4" r="2.6" fill="#ffffff" stroke="#ffffff" stroke-width="0"/></svg>
<div class="a" style="left:743px;top:410px;width:74.5px;height:100px;background:#1d1d1d;border-radius:3px;box-shadow:0 0 0 1px #151515,0 1px 3px rgba(0,0,0,0.5)"></div>
<div class="a" style="left:743px;top:410px;width:74.5px;height:10px;background:linear-gradient(to right,#ac9886 0%,#8a7664 45%,#5e5044 80%,#3e3832 100%);border-radius:3px 3px 0 0"></div>
<div class="a" style="left:743px;top:410px;width:74.5px;height:10px;background:linear-gradient(to bottom,rgba(255,255,255,0.10) 0%,rgba(255,255,255,0.02) 40%,rgba(0,0,0,0.12) 75%,rgba(255,255,255,0.04) 100%);border-radius:3px 3px 0 0"></div>
<div class="t" style="left:748.5px;top:411.9px;font-size:6px;-webkit-text-stroke:0.12px currentColor;color:#f0ece6;font-weight:400;">Skin_M</div>
<svg class="a" style="left:747.5px;top:425.2px" width="9" height="8" viewBox="0 0 9 8"><path d="M6.2 2.3 L8.3 4 L6.2 5.7Z" fill="#f2f2f2"/><circle cx="3.8" cy="4" r="2.6" fill="#f2f2f2" stroke="#f2f2f2" stroke-width="0"/></svg>
<div class="t" style="left:758.8px;top:426.5px;font-size:5.4px;-webkit-text-stroke:0.12px currentColor;color:#e4e4e4;font-weight:400;">Base Color</div>
<svg class="a" style="left:747.5px;top:439px" width="9" height="8" viewBox="0 0 9 8"><path d="M6.2 2.3 L8.3 4 L6.2 5.7Z" fill="#f2f2f2"/><circle cx="3.8" cy="4" r="2.6" fill="#f2f2f2" stroke="#f2f2f2" stroke-width="0"/></svg>
<div class="t" style="left:758.8px;top:440.3px;font-size:5.4px;-webkit-text-stroke:0.12px currentColor;color:#e4e4e4;font-weight:400;">Metallic</div>
<svg class="a" style="left:747.5px;top:453.5px" width="9" height="8" viewBox="0 0 9 8"><path d="M6.2 2.3 L8.3 4 L6.2 5.7Z" fill="#f2f2f2"/><circle cx="3.8" cy="4" r="2.6" fill="#f2f2f2" stroke="#f2f2f2" stroke-width="0"/></svg>
<div class="t" style="left:758.8px;top:454.8px;font-size:5.4px;-webkit-text-stroke:0.12px currentColor;color:#e4e4e4;font-weight:400;">Specular</div>
<svg class="a" style="left:747.5px;top:467.4px" width="9" height="8" viewBox="0 0 9 8"><path d="M6.2 2.3 L8.3 4 L6.2 5.7Z" fill="#f2f2f2"/><circle cx="3.8" cy="4" r="2.6" fill="#f2f2f2" stroke="#f2f2f2" stroke-width="0"/></svg>
<div class="t" style="left:758.8px;top:468.7px;font-size:5.4px;-webkit-text-stroke:0.12px currentColor;color:#e4e4e4;font-weight:400;">Roughness</div>
<svg class="a" style="left:747.5px;top:481.7px" width="9" height="8" viewBox="0 0 9 8"><path d="M6.2 2.3 L8.3 4 L6.2 5.7Z" fill="#3a3a3a"/><circle cx="3.8" cy="4" r="2.6" fill="#3a3a3a" stroke="#3a3a3a" stroke-width="0"/></svg>
<div class="t" style="left:758.8px;top:483.0px;font-size:5.4px;-webkit-text-stroke:0.12px currentColor;color:#3c3c3c;font-weight:400;">Anisotropy</div>
<svg class="a" style="left:747.5px;top:495.2px" width="9" height="8" viewBox="0 0 9 8"><path d="M6.2 2.3 L8.3 4 L6.2 5.7Z" fill="#e0e0e0"/><circle cx="3.8" cy="4" r="2.2" fill="none" stroke="#e0e0e0" stroke-width="1.5"/></svg>
<div class="t" style="left:758.8px;top:496.5px;font-size:5.4px;-webkit-text-stroke:0.12px currentColor;color:#e4e4e4;font-weight:400;">Emissive Color</div>

<!-- right sidebar -->
<div class="a" style="left:1007px;top:54px;width:17px;height:482px;background:#1a1a1a;"></div>
<svg class="a" style="left:1011px;top:59px" width="9" height="7" viewBox="0 0 9 7"><rect x="0" y="0" width="9" height="1.6" fill="#dcdcdc"/><rect x="0" y="2.7" width="1.6" height="1.5" fill="#dcdcdc"/><rect x="2.6" y="3" width="6.4" height="0.9" fill="#8a8a8a"/><rect x="0" y="5.4" width="1.6" height="1.5" fill="#dcdcdc"/><rect x="2.6" y="5.7" width="6.4" height="0.9" fill="#8a8a8a"/></svg>
<div class="t" style="left:1011px;top:95px;font-size:7.4px;color:#c8c8c8;transform:rotate(-90deg);transform-origin:0 0">Palette</div>
<svg class="a" style="left:1011px;top:144px" width="9" height="7" viewBox="0 0 9 7"><rect x="0" y="0" width="9" height="1.6" fill="#dcdcdc"/><rect x="0" y="2.7" width="1.6" height="1.5" fill="#dcdcdc"/><rect x="2.6" y="3" width="6.4" height="0.9" fill="#8a8a8a"/><rect x="0" y="5.4" width="1.6" height="1.5" fill="#dcdcdc"/><rect x="2.6" y="5.7" width="6.4" height="0.9" fill="#8a8a8a"/></svg>
<div class="t" style="left:1011px;top:189px;font-size:7.4px;color:#c8c8c8;transform:rotate(-90deg);transform-origin:0 0">Substrate</div>
<!-- stats panel -->
<div class="a" style="left:224px;top:504px;width:783px;height:17px;background:#161616;"></div>
<div class="a" style="left:226px;top:507.7px;width:86px;height:13px;background:#242424;border-radius:2px 2px 0 0"></div>
<svg class="a" style="left:229px;top:509.5px" width="10" height="10" viewBox="0 0 10 10"><circle cx="4.3" cy="4.5" r="3.7" fill="none" stroke="#cfcfcf" stroke-width="1"/><path d="M2.3 3.5 L4 5.2 L6 3" fill="none" stroke="#cfcfcf" stroke-width="0.8"/><rect x="7.8" y="6.5" width="1.4" height="3.3" fill="#cfcfcf"/></svg>
<div class="t" style="left:241px;top:510.4px;font-size:7.3px;color:#c8c8c8;font-weight:400;">Stats</div>
<div class="t" style="left:299.5px;top:510.0px;font-size:8px;color:#c0c0c0;font-weight:400;">×</div>
<div class="a" style="left:224px;top:521px;width:783px;height:15px;background:#1d1d1d;"></div>
<div class="a" style="left:224px;top:504px;width:2px;height:32px;background:#121212;"></div>
<!-- status bar -->
<div class="a" style="left:0px;top:536px;width:1024px;height:18px;background:#1b1b1b;"></div>
<div class="a" style="left:0px;top:536px;width:1024px;height:1px;background:#262626;"></div>
<svg class="a" style="left:5px;top:541px" width="9" height="9" viewBox="0 0 9 9"><path d="M0.5 1.5 H3 L3.8 2.3 H6 V4 H4.5 V8.5 H0.5Z" fill="#cfcfcf"/><circle cx="6.5" cy="6.3" r="1.8" fill="none" stroke="#cfcfcf" stroke-width="0.9"/></svg>
<div class="t" style="left:16.5px;top:542.6px;font-size:7.6px;letter-spacing:-0.2px;color:#c8c8c8;font-weight:400;">Content Drawer</div>
<div class="a" style="left:71.5px;top:538px;width:1px;height:16px;background:#131313;"></div>
<svg class="a" style="left:79px;top:540.5px" width="6" height="10" viewBox="0 0 6 10"><rect x="0.4" y="0.4" width="5.2" height="9.2" fill="#cfcfcf"/><path d="M1.5 4 L3 5.5 L1.5 7 M3.3 8 H4.8" fill="none" stroke="#1b1b1b" stroke-width="0.8"/></svg>
<div class="t" style="left:88.6px;top:542.6px;font-size:7.6px;letter-spacing:-0.2px;color:#c8c8c8;font-weight:400;">Output Log</div>
<div class="a" style="left:128px;top:538px;width:1px;height:16px;background:#131313;"></div>
<svg class="a" style="left:137px;top:541.5px" width="10" height="8" viewBox="0 0 10 8"><rect x="0.5" y="0.5" width="9" height="7" fill="none" stroke="#cfcfcf" stroke-width="1"/><path d="M2 2.5 L3.5 4 L2 5.5 M4.5 5.8 H7" fill="none" stroke="#cfcfcf" stroke-width="0.8"/></svg>
<div class="t" style="left:148.5px;top:542.6px;font-size:7.6px;letter-spacing:-0.2px;color:#c8c8c8;font-weight:400;">Cmd</div>
<svg class="a" style="left:167px;top:544px" width="6" height="4" viewBox="0 0 6 4"><path d="M0.7 0.7 L3 3 L5.3 0.7" fill="none" stroke="#c8c8c8" stroke-width="1.1"/></svg>
<div class="a" style="left:180.8px;top:541.4px;width:140px;height:9.6px;background:#0c0c0c;border-radius:1px"></div>
<div class="t" style="left:184.3px;top:543.1px;font-family:'Liberation Mono';font-size:6.2px;color:#565656">Enter Console Command</div>
<div class="a" style="left:323px;top:538px;width:1px;height:16px;background:#131313;"></div>
<div class="a" style="left:894px;top:537px;width:130px;height:17px;background:#1e1e1e;"></div>
<svg class="a" style="left:900px;top:541px" width="9" height="9" viewBox="0 0 9 9"><rect x="0.5" y="0.5" width="6" height="7" fill="#cfcfcf"/><path d="M3.5 6 L5.3 7.8 L8.6 4.5" fill="none" stroke="#cfcfcf" stroke-width="1"/></svg>
<div class="t" style="left:911.5px;top:542.6px;font-size:7.6px;letter-spacing:-0.2px;color:#c8c8c8;font-weight:400;">All Saved</div>
<svg class="a" style="left:951px;top:540px" width="8" height="11" viewBox="0 0 8 11"><circle cx="1.8" cy="1.8" r="1.4" fill="#e0e0e0"/><circle cx="6.2" cy="1.8" r="1.4" fill="#e0e0e0"/><circle cx="1.8" cy="9.2" r="1.4" fill="#e0e0e0"/><path d="M1.8 2 V9 M6.2 2 V4 C6.2 5.5 1.8 5.5 1.8 7" fill="none" stroke="#e0e0e0" stroke-width="0.9"/></svg>
<div class="t" style="left:962px;top:542.6px;font-size:7.6px;letter-spacing:-0.2px;color:#c8c8c8;font-weight:400;">Revision Control</div>
<svg class="a" style="left:1016px;top:549px" width="5" height="4" viewBox="0 0 5 4"><path d="M4.5 0 V3.5 H0.5" fill="none" stroke="#777" stroke-width="0.7"/></svg>
</div></body></html>
